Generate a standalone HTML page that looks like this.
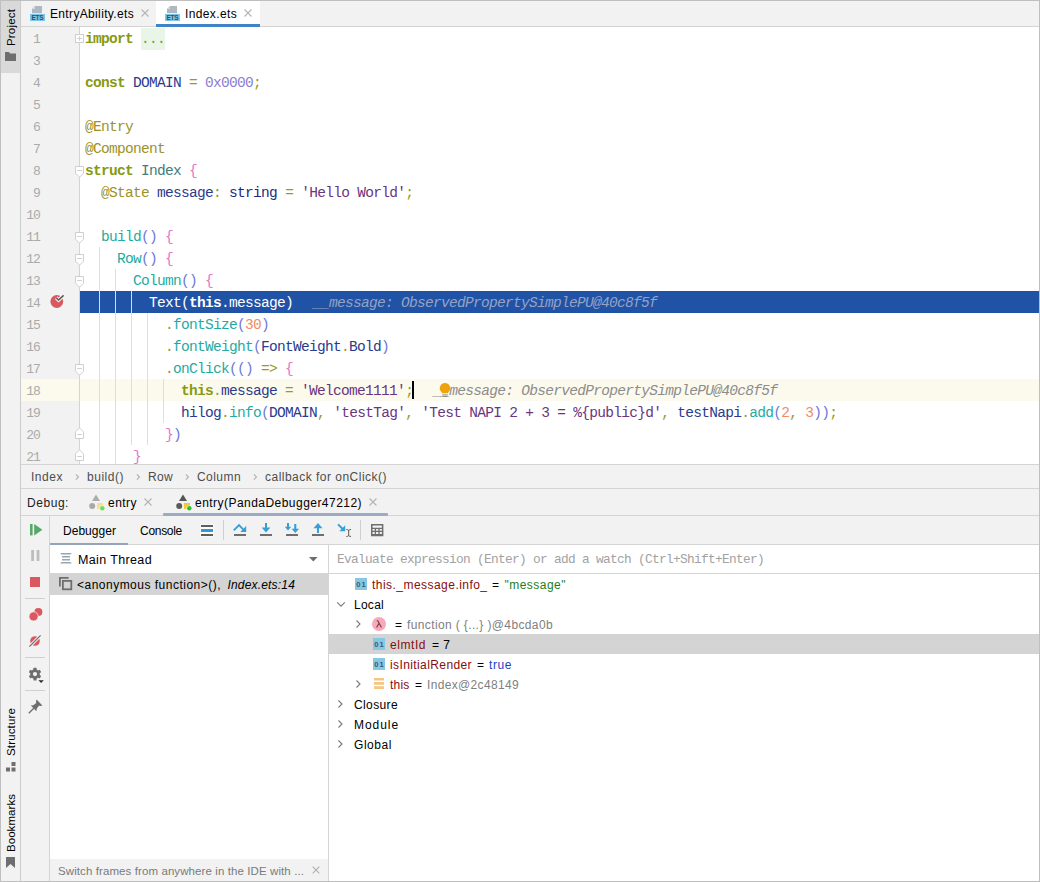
<!DOCTYPE html>
<html><head><meta charset="utf-8">
<style>
*{box-sizing:border-box;margin:0;padding:0}
html,body{width:1040px;height:882px;overflow:hidden;background:#fff}
body{position:relative;font-family:"Liberation Sans",sans-serif;font-size:13px;color:#000}
.abs{position:absolute}
.t{position:absolute;white-space:pre;font-size:13px;line-height:16px;height:16px}
#frame{position:absolute;left:0;top:0;width:1040px;height:882px;border:1px solid #bfbfbf;z-index:50}
#strip{left:1px;top:1px;width:19px;height:880px;background:#f2f2f2}
#stripb{left:20px;top:1px;width:1px;height:880px;background:#cbcbcb}
#projtab{left:1px;top:1px;width:19px;height:72px;background:#d9d9d9}
.vt{position:absolute;transform-origin:0 0;transform:rotate(-90deg);white-space:pre;font-size:13px;line-height:16px;height:16px;color:#000}
#tabbar{left:21px;top:1px;width:1018px;height:25px;background:#f2f2f2}
#tabline{left:21px;top:26px;width:1018px;height:1px;background:#d4d4d4}
#acttab{left:156px;top:1px;width:104px;height:26px;background:#fff}
#actline{left:156px;top:24px;width:104px;height:3px;background:#4083c9}
#gutter{left:21px;top:27px;width:58px;height:437px;background:#f2f2f2}
#gutline{left:79px;top:27px;width:1px;height:437px;background:#d4d4d4}
#editor{left:80px;top:27px;width:959px;height:437px;overflow:hidden}
.g{position:absolute;width:1px;background:#dedede}
.ln{position:absolute;left:20px;width:20px;text-align:right;font-family:"Liberation Mono",monospace;font-size:13px;letter-spacing:-0.9px;color:#aaaaaa;height:22px;line-height:22px;margin-top:2px}
.cl{position:absolute;left:5px;height:22px;line-height:22px;font-family:"Liberation Mono",monospace;font-size:14.5px;letter-spacing:-0.7014px;white-space:pre;color:#26327f;margin-top:1px}
.kw{color:#869a10;font-weight:bold}
.op{color:#9a9a1c}
.an{color:#9c9224}
.id{color:#2b3a8c}
.id2{color:#1f2a7a}
.ty{color:#417c7c}
.fn{color:#1faaa2}
.br{color:#e874c6}
.pa{color:#6c7ad6}
.st{color:#6a3580}
.nu{color:#8b80d2}
.nm{color:#f08c64}
.hint{color:#8c8c8c;font-style:italic;margin-left:20px}
.hint2{color:#94a3c4;font-style:italic;margin-left:20px}
.selt{color:#fff}
.fold{background:#e9f5e6;color:#7a9a40;padding:3px 0 3px 0}
#sel{left:80px;top:291px;width:959px;height:22px;background:#2052a6}
#cur{left:21px;top:379px;width:1018px;height:22px;background:#fcfaed}
.hl{position:absolute;height:1px;background:#d4d4d4}
.vl{position:absolute;width:1px;background:#d4d4d4}
.bg{position:absolute;background:#f2f2f2}
svg{position:absolute;overflow:visible}
</style></head><body>
<div class="abs" id="strip"></div><div class="abs" id="stripb"></div><div class="abs" id="projtab"></div>
<div class="abs" id="tabbar"></div><div class="abs" id="tabline"></div><div class="abs" id="acttab"></div><div class="abs" id="actline"></div>
<div class="abs" id="gutter"></div><div class="abs" id="cur"></div><div class="abs" id="gutline"></div><div class="abs" id="sel"></div>
<div class="g" style="left:99px;top:247px;height:217px"></div>
<div class="g" style="left:115px;top:269px;height:195px"></div>
<div class="g" style="left:131px;top:291px;height:154px"></div>
<div class="g" style="left:147px;top:313px;height:132px"></div>
<div class="g" style="left:163px;top:379px;height:44px"></div>
<div class="abs" id="editor">
<div class="cl" style="top:0px"><span class="kw">import</span> <span class="fold">...</span></div>
<div class="cl" style="top:44px"><span class="kw">const</span> <span class="id">DOMAIN</span> <span class="op">=</span> <span class="nu">0x0000</span><span class="op">;</span></div>
<div class="cl" style="top:88px"><span class="an">@Entry</span></div>
<div class="cl" style="top:110px"><span class="an">@Component</span></div>
<div class="cl" style="top:132px"><span class="kw">struct</span> <span class="ty">Index</span> <span class="br">{</span></div>
<div class="cl" style="top:154px">  <span class="an">@State</span> <span class="id">message</span><span class="op">:</span> <span class="id2">string</span> <span class="op">=</span> <span class="st">'Hello World'</span><span class="op">;</span></div>
<div class="cl" style="top:198px">  <span class="fn">build</span><span class="pa">()</span> <span class="br">{</span></div>
<div class="cl" style="top:220px">    <span class="fn">Row</span><span class="pa">()</span> <span class="br">{</span></div>
<div class="cl" style="top:242px">      <span class="fn">Column</span><span class="pa">()</span> <span class="br">{</span></div>
<div class="cl" style="top:264px"><span class="selt">        Text(<b>this</b>.message)</span><span class="hint2">__message: ObservedPropertySimplePU@40c8f5f</span></div>
<div class="cl" style="top:286px">          <span class="op">.</span><span class="fn">fontSize</span><span class="pa">(</span><span class="nm">30</span><span class="pa">)</span></div>
<div class="cl" style="top:308px">          <span class="op">.</span><span class="fn">fontWeight</span><span class="pa">(</span><span class="id">FontWeight</span><span class="op">.</span><span class="id">Bold</span><span class="pa">)</span></div>
<div class="cl" style="top:330px">          <span class="op">.</span><span class="fn">onClick</span><span class="pa">(()</span> <span class="op">=&gt;</span> <span class="br">{</span></div>
<div class="cl" style="top:352px">            <span class="kw">this</span><span class="op">.</span><span class="id">message</span> <span class="op">=</span> <span class="st">'Welcome1111'</span><span class="op">;</span><span class="hint">__message: ObservedPropertySimplePU@40c8f5f</span></div>
<div class="cl" style="top:374px">            <span class="id">hilog</span><span class="op">.</span><span class="fn">info</span><span class="pa">(</span><span class="id">DOMAIN</span><span class="op">,</span> <span class="st">'testTag'</span><span class="op">,</span> <span class="st">'Test NAPI 2 + 3 = %{public}d'</span><span class="op">,</span> <span class="id">testNapi</span><span class="op">.</span><span class="fn">add</span><span class="pa">(</span><span class="nm">2</span><span class="op">,</span> <span class="nm">3</span><span class="pa">))</span><span class="op">;</span></div>
<div class="cl" style="top:396px">          <span class="br">}</span><span class="pa">)</span></div>
<div class="cl" style="top:418px">      <span class="br">}</span></div>
</div>
<div class="ln" style="top:27px">1</div>
<div class="ln" style="top:49px">3</div>
<div class="ln" style="top:71px">4</div>
<div class="ln" style="top:93px">5</div>
<div class="ln" style="top:115px">6</div>
<div class="ln" style="top:137px">7</div>
<div class="ln" style="top:159px">8</div>
<div class="ln" style="top:181px">9</div>
<div class="ln" style="top:203px">10</div>
<div class="ln" style="top:225px">11</div>
<div class="ln" style="top:247px">12</div>
<div class="ln" style="top:269px">13</div>
<div class="ln" style="top:291px">14</div>
<div class="ln" style="top:313px">15</div>
<div class="ln" style="top:335px">16</div>
<div class="ln" style="top:357px">17</div>
<div class="ln" style="top:379px">18</div>
<div class="ln" style="top:401px">19</div>
<div class="ln" style="top:423px">20</div>
<div class="ln" style="top:445px">21</div>
<div class="vt" style="left:3px;top:46px;font-size:11.5px;letter-spacing:0.172px">Project</div>
<svg style="left:5px;top:52px" width="11" height="9" viewBox="0 0 11 9"><path d="M0 0H4L5 1.5H11V9H0Z" fill="#6e6e6e"/></svg>
<div class="vt" style="left:3px;top:756px;font-size:11.5px;letter-spacing:0.149px">Structure</div>
<svg style="left:6px;top:762px" width="10" height="10" viewBox="0 0 10 10"><rect x="5.5" y="0" width="4" height="4" fill="#6e6e6e"/><rect x="0" y="5.5" width="4" height="4" fill="#6e6e6e"/><rect x="5.5" y="5.5" width="4" height="4" fill="#6e6e6e"/></svg>
<div class="vt" style="left:3px;top:852px;font-size:11.5px;letter-spacing:0.053px">Bookmarks</div>
<svg style="left:6px;top:857px" width="9" height="11" viewBox="0 0 9 11"><path d="M0 0H9V11L4.5 7L0 11Z" fill="#6e6e6e"/></svg>
<svg style="left:30px;top:6px" width="15" height="15" viewBox="0 0 15 15"><path d="M5 0H12V7.2H2V3Z" fill="#aeb7c2"/><path d="M5 0V3H2Z" fill="#d5dae0"/><rect x="0" y="8" width="15" height="7" fill="#7cc6e6"/><text x="7.5" y="14" font-family="Liberation Sans" font-weight="bold" font-size="6.5" fill="#2f4f66" text-anchor="middle" textLength="12">ETS</text></svg>
<div class="t" style="left:50px;top:6px;font-size:12px;color:#000;letter-spacing:0.346px;">EntryAbility.ets</div>
<svg style="left:140px;top:8px" width="10" height="10" viewBox="-5 -5 10 10"><path d="M-3.5 -3.5L3.5 3.5M3.5 -3.5L-3.5 3.5" stroke="#b4b4b4" stroke-width="1.1" fill="none"/></svg>
<svg style="left:165px;top:6px" width="15" height="15" viewBox="0 0 15 15"><path d="M5 0H12V7.2H2V3Z" fill="#aeb7c2"/><path d="M5 0V3H2Z" fill="#d5dae0"/><rect x="0" y="8" width="15" height="7" fill="#7cc6e6"/><text x="7.5" y="14" font-family="Liberation Sans" font-weight="bold" font-size="6.5" fill="#2f4f66" text-anchor="middle" textLength="12">ETS</text></svg>
<div class="t" style="left:185px;top:6px;font-size:12px;color:#000;letter-spacing:0.367px;">Index.ets</div>
<svg style="left:243px;top:8px" width="10" height="10" viewBox="-5 -5 10 10"><path d="M-3.5 -3.5L3.5 3.5M3.5 -3.5L-3.5 3.5" stroke="#b4b4b4" stroke-width="1.1" fill="none"/></svg>
<div class="hl" style="left:21px;top:464px;width:1018px"></div>
<div class="bg" style="left:21px;top:465px;width:1018px;height:23px"></div>
<div class="hl" style="left:21px;top:488px;width:1018px"></div>
<div class="t" style="left:31px;top:469px;font-size:12px;color:#4d4d4d;letter-spacing:0.529px;">Index</div>
<svg style="left:72.5px;top:471.5px" width="8" height="10" viewBox="-4 -5 8 10"><path d="M-1.12 -2.6L1.48 0L-1.12 2.6" stroke="#b0b0b0" stroke-width="1.1" fill="none"/></svg>
<div class="t" style="left:87px;top:469px;font-size:12px;color:#4d4d4d;letter-spacing:0.522px;">build()</div>
<svg style="left:133.5px;top:471.5px" width="8" height="10" viewBox="-4 -5 8 10"><path d="M-1.12 -2.6L1.48 0L-1.12 2.6" stroke="#b0b0b0" stroke-width="1.1" fill="none"/></svg>
<div class="t" style="left:148px;top:469px;font-size:12px;color:#4d4d4d;letter-spacing:0.331px;">Row</div>
<svg style="left:182.5px;top:471.5px" width="8" height="10" viewBox="-4 -5 8 10"><path d="M-1.12 -2.6L1.48 0L-1.12 2.6" stroke="#b0b0b0" stroke-width="1.1" fill="none"/></svg>
<div class="t" style="left:197px;top:469px;font-size:12px;color:#4d4d4d;letter-spacing:0.441px;">Column</div>
<svg style="left:250.5px;top:471.5px" width="8" height="10" viewBox="-4 -5 8 10"><path d="M-1.12 -2.6L1.48 0L-1.12 2.6" stroke="#b0b0b0" stroke-width="1.1" fill="none"/></svg>
<div class="t" style="left:265px;top:469px;font-size:12px;color:#4d4d4d;letter-spacing:0.483px;">callback for onClick()</div>
<div class="bg" style="left:21px;top:489px;width:1018px;height:26px"></div>
<div class="hl" style="left:21px;top:515px;width:1018px"></div>
<div class="t" style="left:27px;top:495px;font-size:12px;color:#222;letter-spacing:0.551px;">Debug:</div>
<svg style="left:89px;top:494px" width="17" height="17" viewBox="0 0 17 17"><path d="M7 0.5L11 7H3Z" fill="#adadad"/><circle cx="3.2" cy="12" r="3" fill="#a8a8a8"/><rect x="8" y="9" width="6" height="6" fill="#f6dd98"/><circle cx="13.3" cy="14.3" r="2.8" fill="#f2f2f2"/><circle cx="13.3" cy="14.3" r="2.2" fill="#6fdc5e"/></svg>
<div class="t" style="left:108px;top:495px;font-size:12px;color:#000;letter-spacing:0.464px;">entry</div>
<svg style="left:143px;top:497px" width="10" height="10" viewBox="-5 -5 10 10"><path d="M-3.5 -3.5L3.5 3.5M3.5 -3.5L-3.5 3.5" stroke="#b4b4b4" stroke-width="1.1" fill="none"/></svg>
<svg style="left:176px;top:494px" width="17" height="17" viewBox="0 0 17 17"><path d="M7 0.5L11 7H3Z" fill="#555555"/><circle cx="3.2" cy="12" r="3" fill="#5a5a5a"/><rect x="8" y="9" width="6" height="6" fill="#f4c63d"/><circle cx="13.3" cy="14.3" r="2.8" fill="#f2f2f2"/><circle cx="13.3" cy="14.3" r="2.2" fill="#22c52a"/></svg>
<div class="t" style="left:195px;top:495px;font-size:12px;color:#000;letter-spacing:0.462px;">entry(PandaDebugger47212)</div>
<svg style="left:367.5px;top:497px" width="10" height="10" viewBox="-5 -5 10 10"><path d="M-3.5 -3.5L3.5 3.5M3.5 -3.5L-3.5 3.5" stroke="#b4b4b4" stroke-width="1.1" fill="none"/></svg>
<div class="abs" style="left:163px;top:513px;width:225px;height:3px;background:#9daac4;border-radius:1px"></div>
<div class="bg" style="left:21px;top:516px;width:1018px;height:28px"></div>
<div class="hl" style="left:50px;top:544px;width:989px"></div>
<div class="bg" style="left:21px;top:544px;width:28px;height:337px"></div>
<div class="vl" style="left:49px;top:516px;height:365px"></div>
<div class="t" style="left:63px;top:523px;font-size:12px;color:#000;letter-spacing:0.037px;">Debugger</div>
<div class="t" style="left:140px;top:523px;font-size:12px;color:#000;letter-spacing:-0.290px;">Console</div>
<div class="abs" style="left:50px;top:543px;width:78px;height:2px;background:#95a3bd;z-index:3"></div>
<svg style="left:200px;top:524px" width="14" height="13" viewBox="0 0 14 13"><rect x="0.3" y="0.3" width="13.4" height="12.4" rx="1" fill="#fbfbfb"/><rect x="1" y="1" width="12" height="2" fill="#5e5e5e"/><rect x="1" y="5" width="12" height="3" fill="#2f98d6"/><rect x="1" y="10" width="12" height="2" fill="#5e5e5e"/></svg>
<div class="vl" style="left:223px;top:520px;height:20px;background:#d0d0d0"></div>
<svg style="left:0;top:0" width="1040" height="882" viewBox="0 0 1040 882">
<g fill="#6e6e6e"><rect x="234" y="534" width="12" height="2"/><rect x="260" y="534" width="12" height="2"/><rect x="286" y="534" width="12" height="2"/><rect x="312" y="534" width="12" height="2"/></g>
<path d="M233.8 530.4L239 525.2L243.6 529.8" stroke="#389fd6" stroke-width="1.9" fill="none"/><path d="M246.2 526V531.9H240.3Z" fill="#389fd6"/>
<g fill="#389fd6"><rect x="265" y="523" width="2" height="5.5"/><path d="M261.6 527.4H270.4L266 532.6Z"/>
<rect x="287" y="523" width="2" height="4.5"/><path d="M284.8 526.8H291.2L288 530.4Z"/>
<rect x="294.2" y="524" width="2.1" height="5.5"/><path d="M291.6 528.8H299L295.3 532.9Z"/>
<rect x="317" y="527.5" width="2" height="5.5"/><path d="M313.5 528.2H322.5L318 523.1Z"/>
<path d="M337.4 525.1L338.8 523.7L343.4 528.3L342 529.7Z"/><path d="M345.2 525.3V531.2H339.3Z"/></g>
<path d="M346.4 529.5Q348 529.5 348.7 530.4Q349.4 529.5 351 529.5M348.7 530.2V535.8M346.4 536.5Q348 536.5 348.7 535.6Q349.4 536.5 351 536.5" stroke="#4a4a4a" stroke-width="0.9" fill="none"/>
</svg>
<div class="vl" style="left:360px;top:520px;height:20px;background:#d0d0d0"></div>
<svg style="left:371px;top:524px" width="12.4" height="12.2" viewBox="0 0 13 13" preserveAspectRatio="none"><path d="M0 0H13V13H0Z M1.6 1.6V4H11.4V1.6Z M1.6 5.4V7.2H3.9V5.4Z M5.3 5.4V7.2H7.7V5.4Z M9.1 5.4V7.2H11.4V5.4Z M1.6 8.6V10.6H3.9V8.6Z M5.3 8.6V10.6H7.7V8.6Z M9.1 8.6V10.6H11.4V8.6Z" fill="#6e6e6e" fill-rule="evenodd"/></svg>
<svg style="left:30px;top:524px" width="13" height="12" viewBox="0 0 13 12"><rect x="0" y="0" width="2.6" height="11.4" fill="#59a869"/><path d="M4.2 0L12.4 5.7L4.2 11.4Z" fill="#59a869"/></svg>
<svg style="left:31px;top:550px" width="10" height="11" viewBox="0 0 10 11"><rect x="0.2" y="0" width="2.8" height="11" fill="#bdbdbd"/><rect x="5.6" y="0" width="2.8" height="11" fill="#bdbdbd"/></svg>
<div class="abs" style="left:30px;top:577px;width:10px;height:10px;background:#db5860"></div>
<div class="hl" style="left:25px;top:598px;width:20px;background:#d0d0d0"></div>
<svg style="left:28px;top:607px" width="15" height="15" viewBox="0 0 15 15"><circle cx="10.4" cy="5" r="4" fill="#db5860"/><circle cx="5.6" cy="9.4" r="4.6" fill="#db5860" stroke="#f2f2f2" stroke-width="0.8"/></svg>
<svg style="left:28px;top:634px" width="14" height="14" viewBox="0 0 14 14"><circle cx="7" cy="7" r="4.8" fill="#db5860"/><path d="M1.4 12.6L12.6 1.4" stroke="#f2f2f2" stroke-width="3"/><path d="M1.4 12.6L12.6 1.4" stroke="#6e6e6e" stroke-width="1.2"/></svg>
<div class="hl" style="left:25px;top:657px;width:20px;background:#d0d0d0"></div>
<svg style="left:28px;top:667px" width="17" height="17" viewBox="0 0 17 17"><g transform="translate(7,7.1)"><circle r="3.5" fill="none" stroke="#6e6e6e" stroke-width="2.7"/><g fill="#6e6e6e"><rect x="-1.5" y="-6.3" width="3" height="2.6" rx="0.5"/><rect x="-1.5" y="3.7" width="3" height="2.6" rx="0.5"/><g transform="rotate(60)"><rect x="-1.5" y="-6.3" width="3" height="2.6" rx="0.5"/><rect x="-1.5" y="3.7" width="3" height="2.6" rx="0.5"/></g><g transform="rotate(120)"><rect x="-1.5" y="-6.3" width="3" height="2.6" rx="0.5"/><rect x="-1.5" y="3.7" width="3" height="2.6" rx="0.5"/></g></g></g><path d="M10.4 13.3H15.8L13.1 16Z" fill="#2b2b2b"/></svg>
<div class="hl" style="left:25px;top:690px;width:20px;background:#d0d0d0"></div>
<svg style="left:28px;top:699px" width="15" height="15" viewBox="0 0 15 15"><path d="M8.6 0.6L14.4 6.4L12.8 7L11 6.8L8.8 9.6L8.4 12.2L2.8 6.6L5.4 6.2L8.2 4L8 2.2Z" fill="#6e6e6e"/><path d="M5.8 9.2L0.8 14.2" stroke="#6e6e6e" stroke-width="1.3"/></svg>
<div class="vl" style="left:328px;top:545px;height:336px"></div>
<div class="hl" style="left:329px;top:573px;width:710px"></div>
<svg style="left:60px;top:553px" width="12" height="12" viewBox="0 0 12 12"><path d="M0.2 0H11.8L10.6 1.5H1.4Z M2 3H10V4.5H2Z M2 6H10V7.5H2Z M1.4 9H10.6L11.8 10.6H0.2Z" fill="#9aa7b0"/></svg>
<div class="t" style="left:78px;top:552px;font-size:12.5px;color:#000;letter-spacing:0.368px;">Main Thread</div>
<svg style="left:309px;top:557px" width="9" height="5" viewBox="0 0 9 5"><path d="M0 0H8.6L4.3 4.6Z" fill="#6e6e6e"/></svg>
<div class="abs" style="left:50px;top:573px;width:278px;height:22px;background:#d4d4d4"></div>
<svg style="left:59px;top:577px" width="14" height="14" viewBox="0 0 14 14"><path d="M0.9 9.6V0.9H9.6" stroke="#6e6e6e" stroke-width="1.8" fill="none"/><rect x="3.9" y="3.9" width="8.4" height="8.4" fill="none" stroke="#6e6e6e" stroke-width="1.8"/></svg>
<div class="t" style="left:77px;top:577px;font-size:12px;color:#000;letter-spacing:0.489px;">&lt;anonymous function&gt;(),</div>
<div class="t" style="left:227.5px;top:577px;font-size:12px;color:#000;letter-spacing:0.177px;font-style:italic;">Index.ets:14</div>
<div class="bg" style="left:50px;top:859px;width:278px;height:22px"></div>
<div class="t" style="left:58px;top:863px;font-size:11.5px;color:#7a7a7a;letter-spacing:0.094px;">Switch frames from anywhere in the IDE with ...</div>
<svg style="left:311px;top:865px" width="10" height="10" viewBox="-5 -5 10 10"><path d="M-3.3 -3.3L3.3 3.3M3.3 -3.3L-3.3 3.3" stroke="#b0b0b0" stroke-width="1.1" fill="none"/></svg>
<div class="t" style="left:337px;top:552px;font-size:12.8px;color:#a2a2a2;letter-spacing:-0.681px;font-family:'Liberation Mono',monospace;">Evaluate expression (Enter) or add a watch (Ctrl+Shift+Enter)</div>
<div class="abs" style="left:329px;top:634px;width:710px;height:20px;background:#d4d4d4"></div>
<svg style="left:355px;top:578px" width="12" height="12" viewBox="0 0 12 12"><rect width="12" height="12" fill="#86c8e4"/><text x="6" y="8.8" font-family="Liberation Sans" font-weight="bold" font-size="7.6" fill="#3a5b70" text-anchor="middle" textLength="9.4">01</text></svg>
<div class="t" style="left:372px;top:577px;font-size:12px;color:#860d0d;letter-spacing:0.462px;">this._message.info_</div>
<div class="t" style="left:492px;top:577px;font-size:12px;color:#000;letter-spacing:-0.008px;">=</div>
<div class="t" style="left:504.5px;top:577px;font-size:12px;color:#1a7f1a;letter-spacing:0.476px;">&quot;message&quot;</div>
<svg style="left:335.5px;top:600px" width="10" height="8" viewBox="-5 -4 10 8"><path d="M-3.8 -1.6L0 2.2L3.8 -1.6" stroke="#7a7a7a" stroke-width="1.1" fill="none"/></svg>
<div class="t" style="left:354px;top:597px;font-size:12px;color:#000;letter-spacing:0.262px;">Local</div>
<svg style="left:354px;top:619px" width="8" height="10" viewBox="-4 -5 8 10"><path d="M-1.50 -3.5L1.99 0L-1.50 3.5" stroke="#7a7a7a" stroke-width="1.1" fill="none"/></svg>
<svg style="left:372px;top:617px" width="14" height="14" viewBox="0 0 14 14"><circle cx="7" cy="7" r="7" fill="#f6a9b9"/><path d="M4.8 3.8L5.8 3.8L9.4 10.4M6.9 6.4L4.6 10.4" stroke="#7a3545" stroke-width="1.1" fill="none"/></svg>
<div class="t" style="left:395px;top:617px;font-size:12px;color:#000;letter-spacing:0.492px;">=</div>
<div class="t" style="left:407px;top:617px;font-size:12px;color:#808080;letter-spacing:0.374px;">function ( {...} )@4bcda0b</div>
<svg style="left:373px;top:638px" width="12" height="12" viewBox="0 0 12 12"><rect width="12" height="12" fill="#86c8e4"/><text x="6" y="8.8" font-family="Liberation Sans" font-weight="bold" font-size="7.6" fill="#3a5b70" text-anchor="middle" textLength="9.4">01</text></svg>
<div class="t" style="left:390px;top:637px;font-size:12px;color:#860d0d;letter-spacing:0.554px;">elmtId</div>
<div class="t" style="left:432px;top:637px;font-size:12px;color:#000;letter-spacing:0.495px;">= 7</div>
<svg style="left:373px;top:658px" width="12" height="12" viewBox="0 0 12 12"><rect width="12" height="12" fill="#86c8e4"/><text x="6" y="8.8" font-family="Liberation Sans" font-weight="bold" font-size="7.6" fill="#3a5b70" text-anchor="middle" textLength="9.4">01</text></svg>
<div class="t" style="left:390px;top:657px;font-size:12px;color:#860d0d;letter-spacing:0.397px;">isInitialRender</div>
<div class="t" style="left:477px;top:657px;font-size:12px;color:#000;letter-spacing:0.192px;">=</div>
<div class="t" style="left:489px;top:657px;font-size:12px;color:#1a3fc8;letter-spacing:0.580px;">true</div>
<svg style="left:354px;top:679px" width="8" height="10" viewBox="-4 -5 8 10"><path d="M-1.50 -3.5L1.99 0L-1.50 3.5" stroke="#7a7a7a" stroke-width="1.1" fill="none"/></svg>
<svg style="left:374px;top:678px" width="10" height="11" viewBox="0 0 10 11"><path d="M0 1.3H10M0 5.4H10M0 9.6H10" stroke="#f5c583" stroke-width="2.6"/></svg>
<div class="t" style="left:390px;top:677px;font-size:12px;color:#860d0d;letter-spacing:0.206px;">this</div>
<div class="t" style="left:415px;top:677px;font-size:12px;color:#000;letter-spacing:0.192px;">=</div>
<div class="t" style="left:427px;top:677px;font-size:12px;color:#808080;letter-spacing:0.340px;">Index@2c48149</div>
<svg style="left:336px;top:699px" width="8" height="10" viewBox="-4 -5 8 10"><path d="M-1.50 -3.5L1.99 0L-1.50 3.5" stroke="#7a7a7a" stroke-width="1.1" fill="none"/></svg>
<div class="t" style="left:354px;top:697px;font-size:12px;color:#000;letter-spacing:0.378px;">Closure</div>
<svg style="left:336px;top:719px" width="8" height="10" viewBox="-4 -5 8 10"><path d="M-1.50 -3.5L1.99 0L-1.50 3.5" stroke="#7a7a7a" stroke-width="1.1" fill="none"/></svg>
<div class="t" style="left:354px;top:717px;font-size:12px;color:#000;letter-spacing:0.940px;">Module</div>
<svg style="left:336px;top:739px" width="8" height="10" viewBox="-4 -5 8 10"><path d="M-1.50 -3.5L1.99 0L-1.50 3.5" stroke="#7a7a7a" stroke-width="1.1" fill="none"/></svg>
<div class="t" style="left:354px;top:737px;font-size:12px;color:#000;letter-spacing:0.552px;">Global</div>
<svg style="left:75px;top:34px" width="9" height="9" viewBox="0 0 9 9"><rect x="0.5" y="0.5" width="8" height="8" fill="#fff" stroke="#cfcfcf"/><path d="M2.2 4.5H6.8M4.5 2.2V6.8" stroke="#cfcfcf" stroke-width="1"/></svg>
<svg style="left:75px;top:166px" width="9" height="12" viewBox="0 0 9 12"><path d="M0.5 0.5H8.5V7.2L4.5 11.2L0.5 7.2Z" fill="#fff" stroke="#cfcfcf"/><path d="M2.2 4.5H6.8" stroke="#cfcfcf" stroke-width="1"/></svg>
<svg style="left:75px;top:232px" width="9" height="12" viewBox="0 0 9 12"><path d="M0.5 0.5H8.5V7.2L4.5 11.2L0.5 7.2Z" fill="#fff" stroke="#cfcfcf"/><path d="M2.2 4.5H6.8" stroke="#cfcfcf" stroke-width="1"/></svg>
<svg style="left:75px;top:254px" width="9" height="12" viewBox="0 0 9 12"><path d="M0.5 0.5H8.5V7.2L4.5 11.2L0.5 7.2Z" fill="#fff" stroke="#cfcfcf"/><path d="M2.2 4.5H6.8" stroke="#cfcfcf" stroke-width="1"/></svg>
<svg style="left:75px;top:276px" width="9" height="12" viewBox="0 0 9 12"><path d="M0.5 0.5H8.5V7.2L4.5 11.2L0.5 7.2Z" fill="#fff" stroke="#cfcfcf"/><path d="M2.2 4.5H6.8" stroke="#cfcfcf" stroke-width="1"/></svg>
<svg style="left:75px;top:364px" width="9" height="12" viewBox="0 0 9 12"><path d="M0.5 0.5H8.5V7.2L4.5 11.2L0.5 7.2Z" fill="#fff" stroke="#cfcfcf"/><path d="M2.2 4.5H6.8" stroke="#cfcfcf" stroke-width="1"/></svg>
<svg style="left:75px;top:428px" width="9" height="11" viewBox="0 0 9 11"><path d="M0.5 10.5H8.5V3.8L4.5 -0.2L0.5 3.8Z" fill="#fff" stroke="#cfcfcf"/><path d="M2.2 6.5H6.8" stroke="#cfcfcf" stroke-width="1"/></svg>
<svg style="left:75px;top:450px" width="9" height="11" viewBox="0 0 9 11"><path d="M0.5 10.5H8.5V3.8L4.5 -0.2L0.5 3.8Z" fill="#fff" stroke="#cfcfcf"/><path d="M2.2 6.5H6.8" stroke="#cfcfcf" stroke-width="1"/></svg>
<svg style="left:49px;top:293px" width="17" height="17" viewBox="0 0 17 17"><circle cx="7.8" cy="8.5" r="6.4" fill="#db5860"/><path d="M7.2 4.7L9.5 7L14.6 2.4" stroke="#f2f2f2" stroke-width="3.6" fill="none"/><path d="M7.2 4.7L9.5 7L14.6 2.4" stroke="#5a5a5a" stroke-width="1.5" fill="none"/></svg>
<div class="abs" style="left:412px;top:381px;width:2px;height:18px;background:#000"></div>
<svg style="left:439px;top:382px" width="12" height="16" viewBox="0 0 12 16"><path d="M6 1A5.2 5.2 0 0 1 9.2 10.3V11.2H2.8V10.3A5.2 5.2 0 0 1 6 1Z" fill="#eea30c"/><path d="M3.2 12.9H8.8M3.6 14.4H8.4" stroke="#8a8a8a" stroke-width="1"/></svg>
<div id="frame"></div>
</body></html>
